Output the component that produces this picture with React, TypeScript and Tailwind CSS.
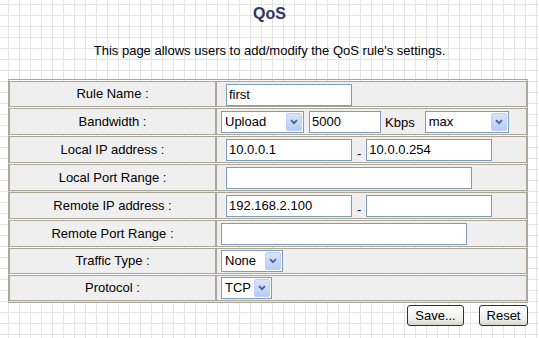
import React from 'react';

const font = { fontFamily: '"Liberation Sans", Arial, sans-serif' };

function Chevron() {
  return (
    <svg width="8" height="6" viewBox="0 0 8 6">
      <path d="M1 1.2 L4 4.2 L7 1.2" fill="none" stroke="#4d6185" strokeWidth="1.8" />
    </svg>
  );
}

function XpSelect({ value, className }: { value: string; className: string }) {
  return (
    <div className={`flex h-[22px] items-center border border-[#7f9db9] bg-white ${className}`}>
      <span className="flex-1 pl-[3px] text-[13px] leading-[18px]">{value}</span>
      <span className="mr-[1px] flex h-[18px] w-[16px] items-center justify-center rounded-[2px] border border-[#bccff7] bg-[linear-gradient(#d9e5fd,#b6cbf8)]">
        <Chevron />
      </span>
    </div>
  );
}

function TextBox({ value = '', className }: { value?: string; className: string }) {
  return (
    <input
      readOnly
      value={value}
      className={`h-[22px] border border-[#7f9db9] bg-white px-[2px] text-[13px] leading-[18px] outline-none ${className}`}
    />
  );
}

function Dash() {
  return <span className="mx-[5px] pt-[8px] text-[13px] leading-[12px]">-</span>;
}

const labelCls = 'w-[207px] border border-[#aca899] bg-[#efefef] text-center text-[13px] text-black';
const fieldCls = 'border border-[#aca899] bg-[#efefef] pl-[4px]';

export default function App() {
  const rows: { label: string; h: string; field: React.ReactNode }[] = [
    {
      label: 'Rule Name :',
      h: 'h-[22px]',
      field: <TextBox value="first" className="ml-[5px] h-[21px] w-[126px]" />,
    },
    {
      label: 'Bandwidth :',
      h: 'h-[27px]',
      field: (
        <div className="flex items-center">
          <XpSelect value="Upload" className="w-[83px]" />
          <TextBox value="5000" className="ml-[5px] w-[72px]" />
          <span className="ml-[4px] mr-[10px] pt-[3px] text-[13px]">Kbps</span>
          <XpSelect value="max" className="w-[84px]" />
        </div>
      ),
    },
    {
      label: 'Local IP address :',
      h: 'h-[27px]',
      field: (
        <div className="flex items-center">
          <TextBox value="10.0.0.1" className="ml-[5px] w-[126px]" />
          <Dash />
          <TextBox value="10.0.0.254" className="w-[126px]" />
        </div>
      ),
    },
    {
      label: 'Local Port Range :',
      h: 'h-[27px]',
      field: <TextBox className="ml-[5px] w-[246px]" />,
    },
    {
      label: 'Remote IP address :',
      h: 'h-[27px]',
      field: (
        <div className="flex items-center">
          <TextBox value="192.168.2.100" className="ml-[5px] w-[126px]" />
          <Dash />
          <TextBox className="w-[126px]" />
        </div>
      ),
    },
    {
      label: 'Remote Port Range :',
      h: 'h-[27px]',
      field: <TextBox className="w-[246px]" />,
    },
    {
      label: 'Traffic Type :',
      h: 'h-[26px]',
      field: <XpSelect value="None" className="w-[62px]" />,
    },
    {
      label: 'Protocol :',
      h: 'h-[26px]',
      field: <XpSelect value="TCP" className="w-[51px]" />,
    },
  ];

  return (
    <div
      style={font}
      className="min-h-screen w-full bg-white bg-[linear-gradient(to_right,#e4e4e4_1px,transparent_1px),linear-gradient(to_bottom,#e4e4e4_1px,transparent_1px)] bg-[size:11px_11px] bg-[position:8px_4px] pt-[4px] text-black"
    >
      <h1 className="h-[19px] text-center text-[16px] font-bold leading-[19px] text-[#333366]">QoS</h1>
      <p className="mt-[20px] h-[16px] text-center text-[13px] leading-[16px]">
        This page allows users to add/modify the QoS rule's settings.
      </p>

      <table className="ml-[8px] mt-[20px] w-[520px] table-fixed border-separate border-spacing-x-0 border-spacing-y-px border border-[#aca899]">
        <tbody>
          {rows.map((r) => (
            <tr key={r.label}>
              <td className={`${labelCls} ${r.h}`}>{r.label}</td>
              <td className={`${fieldCls} ${r.h}`}>{r.field}</td>
            </tr>
          ))}
        </tbody>
      </table>

      <div className="ml-[8px] mt-[2px] flex w-[520px] justify-end gap-[15px]">
        <button className="h-[21px] w-[57px] rounded-[3px] border border-[#003c74] bg-[linear-gradient(#ffffff,#f0efea_70%,#d8d4c8)] text-[13px] leading-[19px]">
          Save...
        </button>
        <button className="h-[21px] w-[49px] rounded-[3px] border border-[#003c74] bg-[linear-gradient(#ffffff,#f0efea_70%,#d8d4c8)] text-[13px] leading-[19px]">
          Reset
        </button>
      </div>
    </div>
  );
}
